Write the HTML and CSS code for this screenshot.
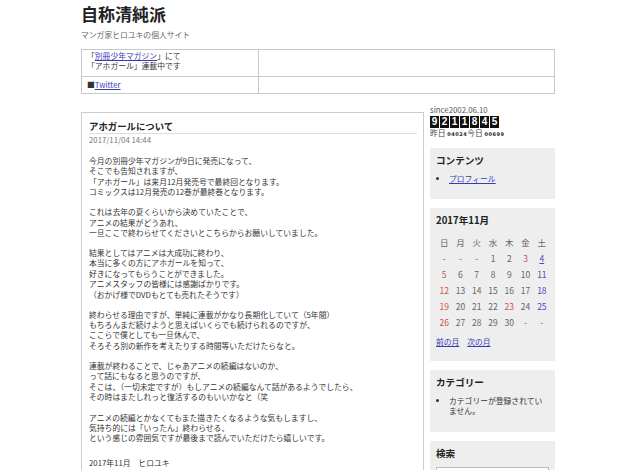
FILE: index.html
```html
<!DOCTYPE html>
<html lang="ja">
<head>
    <meta charset="UTF-8">
    <meta name="viewport" content="width=device-width, initial-scale=1.0">
    <title>自称清純派</title>
    <link rel="stylesheet" href="styles.css">
</head>
<body>

<div class="wrap">

    <div class="site-header">
        <h1>自称清純派</h1>
        <p class="desc">マンガ家ヒロユキの個人サイト</p>
    </div>

    <table class="info">
        <tr class="info-top">
            <td class="info-left">「<a href="#">別冊少年マガジン</a>」にて<br>「アホガール」連載中です</td>
            <td></td>
        </tr>
        <tr class="info-bottom">
            <td>■<a href="#">Twitter</a></td>
            <td></td>
        </tr>
    </table>

    <div class="main">

        <div class="post">
            <h2>アホガールについて</h2>
            <div class="date">2017/11/04 14:44</div>
            <div class="post-body">
                <p>今月の別冊少年マガジンが9日に発売になって、<br>
                そこでも告知されますが、<br>
                「アホガール」は来月12月発売号で最終回となります。<br>
                コミックスは12月発売の12巻が最終巻となります。</p>

                <p>これは去年の夏くらいから決めていたことで、<br>
                アニメの結果がどうあれ、<br>
                一旦ここで終わらせてくださいとこちらからお願いしていました。</p>

                <p>結果としてはアニメは大成功に終わり、<br>
                本当に多くの方にアホガールを知って、<br>
                好きになってもらうことができました。<br>
                アニメスタッフの皆様には感謝ばかりです。<br>
                （おかげ様でDVDもとても売れたそうです）</p>

                <p>終わらせる理由ですが、単純に連載がかなり長期化していて（5年間）<br>
                もちろんまだ続けようと思えばいくらでも続けられるのですが、<br>
                ここらで僕としても一旦休んで、<br>
                そろそろ別の新作を考えたりする時間等いただけたらなと。</p>

                <p class="sp">連載が終わることで、じゃあアニメの続編はないのか、<br>
                って話にもなると思うのですが、<br>
                そこは、（一切未定ですが）もしアニメの続編なんて話があるようでしたら、<br>
                その時はまたしれっと復活するのもいいかなと（笑</p>

                <p class="sp-end">アニメの続編とかなくてもまた描きたくなるような気もしますし、<br>
                気持ち的には「いったん」終わらせる、<br>
                という感じの雰囲気ですが最後まで読んでいただけたら嬉しいです。</p>

                <p>2017年11月　ヒロユキ</p>
            </div>
        </div>

        <div class="side">
            <div class="since">since2002.06.10</div>
            <div class="counter">
                <span>9</span><span>2</span><span>1</span><span>1</span><span>8</span><span>4</span><span>5</span>
            </div>
            <div class="access">昨日 <span class="mini">04024</span>今日 <span class="mini">00699</span></div>

            <div class="box">
                <h3>コンテンツ</h3>
                <ul>
                    <li><a href="#">プロフィール</a></li>
                </ul>
            </div>

            <div class="box">
                <h3>2017年11月</h3>
                <table class="cal">
                    <tr><td>日</td><td>月</td><td>火</td><td>水</td><td>木</td><td>金</td><td>土</td></tr>
                    <tr><td>-</td><td>-</td><td>-</td><td>1</td><td>2</td><td class="sun">3</td><td class="sat"><a href="#">4</a></td></tr>
                    <tr><td class="sun">5</td><td>6</td><td>7</td><td>8</td><td>9</td><td>10</td><td class="sat">11</td></tr>
                    <tr><td class="sun">12</td><td>13</td><td>14</td><td>15</td><td>16</td><td>17</td><td class="sat">18</td></tr>
                    <tr><td class="sun">19</td><td>20</td><td>21</td><td>22</td><td class="sun">23</td><td>24</td><td class="sat">25</td></tr>
                    <tr><td class="sun">26</td><td>27</td><td>28</td><td>29</td><td>30</td><td>-</td><td>-</td></tr>
                </table>
                <div class="cal-nav"><a href="#">前の月</a>　<a href="#">次の月</a></div>
            </div>

            <div class="box">
                <h3>カテゴリー</h3>
                <ul>
                    <li>カテゴリーが登録されていません。</li>
                </ul>
            </div>

            <div class="box">
                <h3>検索</h3>
                <input type="text" class="search">
            </div>
        </div>

    </div>
</div>

</body>
</html>
```

FILE: styles.css
```css
* {
    box-sizing: border-box;
}

body {
    margin: 0;
    background: #fff;
    color: #333;
    font-family: "Noto Sans CJK JP", "Noto Sans", sans-serif;
    font-size: 7.8px;
    line-height: 10.4px;
}

a {
    color: #3a3ab8;
}

.wrap {
    width: 474px;
    margin: 0 0 0 81px;
}

/* header */

.site-header h1 {
    margin: 0;
    padding-top: 3px;
    font-size: 17px;
    line-height: 22px;
    color: #222;
}

.desc {
    margin: 5px 0 0;
    line-height: 10px;
    color: #666;
}

.info {
    width: 100%;
    margin-top: 9px;
    border-collapse: collapse;
    border: 1px solid #c8c8c8;
}

.info td {
    border: 1px solid #c8c8c8;
    padding: 0 5px;
}

.info-left {
    width: 177px;
}

.info-top td {
    height: 27px;
    padding-top: 1px;
    vertical-align: top;
}

.info-bottom td {
    height: 17px;
}

/* main */

.main {
    display: flex;
    align-items: flex-start;
    gap: 6px;
    margin-top: 11px;
}

.post {
    width: 343px;
    margin-top: 7px;
    padding: 0 6px 30px 7px;
    border: 1px solid #ccc;
}

.post h2 {
    margin: 7px 0 0;
    padding-bottom: 1px;
    font-size: 9.4px;
    line-height: 12px;
    color: #222;
    border-bottom: 1px solid #ddd;
}

.date {
    margin-top: 1px;
    line-height: 10px;
    color: #777;
}

.post-body {
    margin-top: 11px;
}

.post-body p {
    margin: 0 0 9.6px;
}

.post-body p.sp {
    margin-bottom: 10px;
}

.post-body p.sp-end {
    margin-bottom: 14px;
}

/* sidebar */

.side {
    width: 125px;
}

.since {
    line-height: 10px;
    color: #555;
}

.counter {
    display: flex;
    gap: 1px;
    margin-top: 1px;
}

.counter span {
    width: 9px;
    height: 12px;
    background: #111;
    color: #fff;
    font-family: "Liberation Sans", Arial, sans-serif;
    font-size: 10px;
    font-weight: bold;
    line-height: 12px;
    text-align: center;
}

.access {
    line-height: 10px;
    color: #444;
}

.mini {
    font-family: "DejaVu Sans", sans-serif;
    font-size: 5px;
    font-weight: bold;
    letter-spacing: 0.5px;
    color: #222;
}

.box {
    margin-top: 9px;
    padding: 6px 8px 8px 6px;
    background: #eee;
}

.box h3 {
    margin: 0;
    font-size: 9.6px;
    line-height: 12px;
    color: #222;
}

.box ul {
    margin: 8px 0 7px;
    padding-left: 13px;
}

.cal {
    width: 114px;
    margin-top: 8px;
    border-collapse: collapse;
    font-size: 8.5px;
    color: #666;
}

.cal td {
    height: 16px;
    padding: 0;
    text-align: center;
}

.cal .sun {
    color: #d05050;
}

.cal .sat,
.cal .sat a {
    color: #4a4ac0;
}

.cal-nav {
    margin-top: 7px;
    padding-bottom: 5px;
}

.search {
    display: block;
    width: 113px;
    height: 14px;
    margin-top: 8px;
    border: 1px solid #bbb;
    background: #fff;
}
```
